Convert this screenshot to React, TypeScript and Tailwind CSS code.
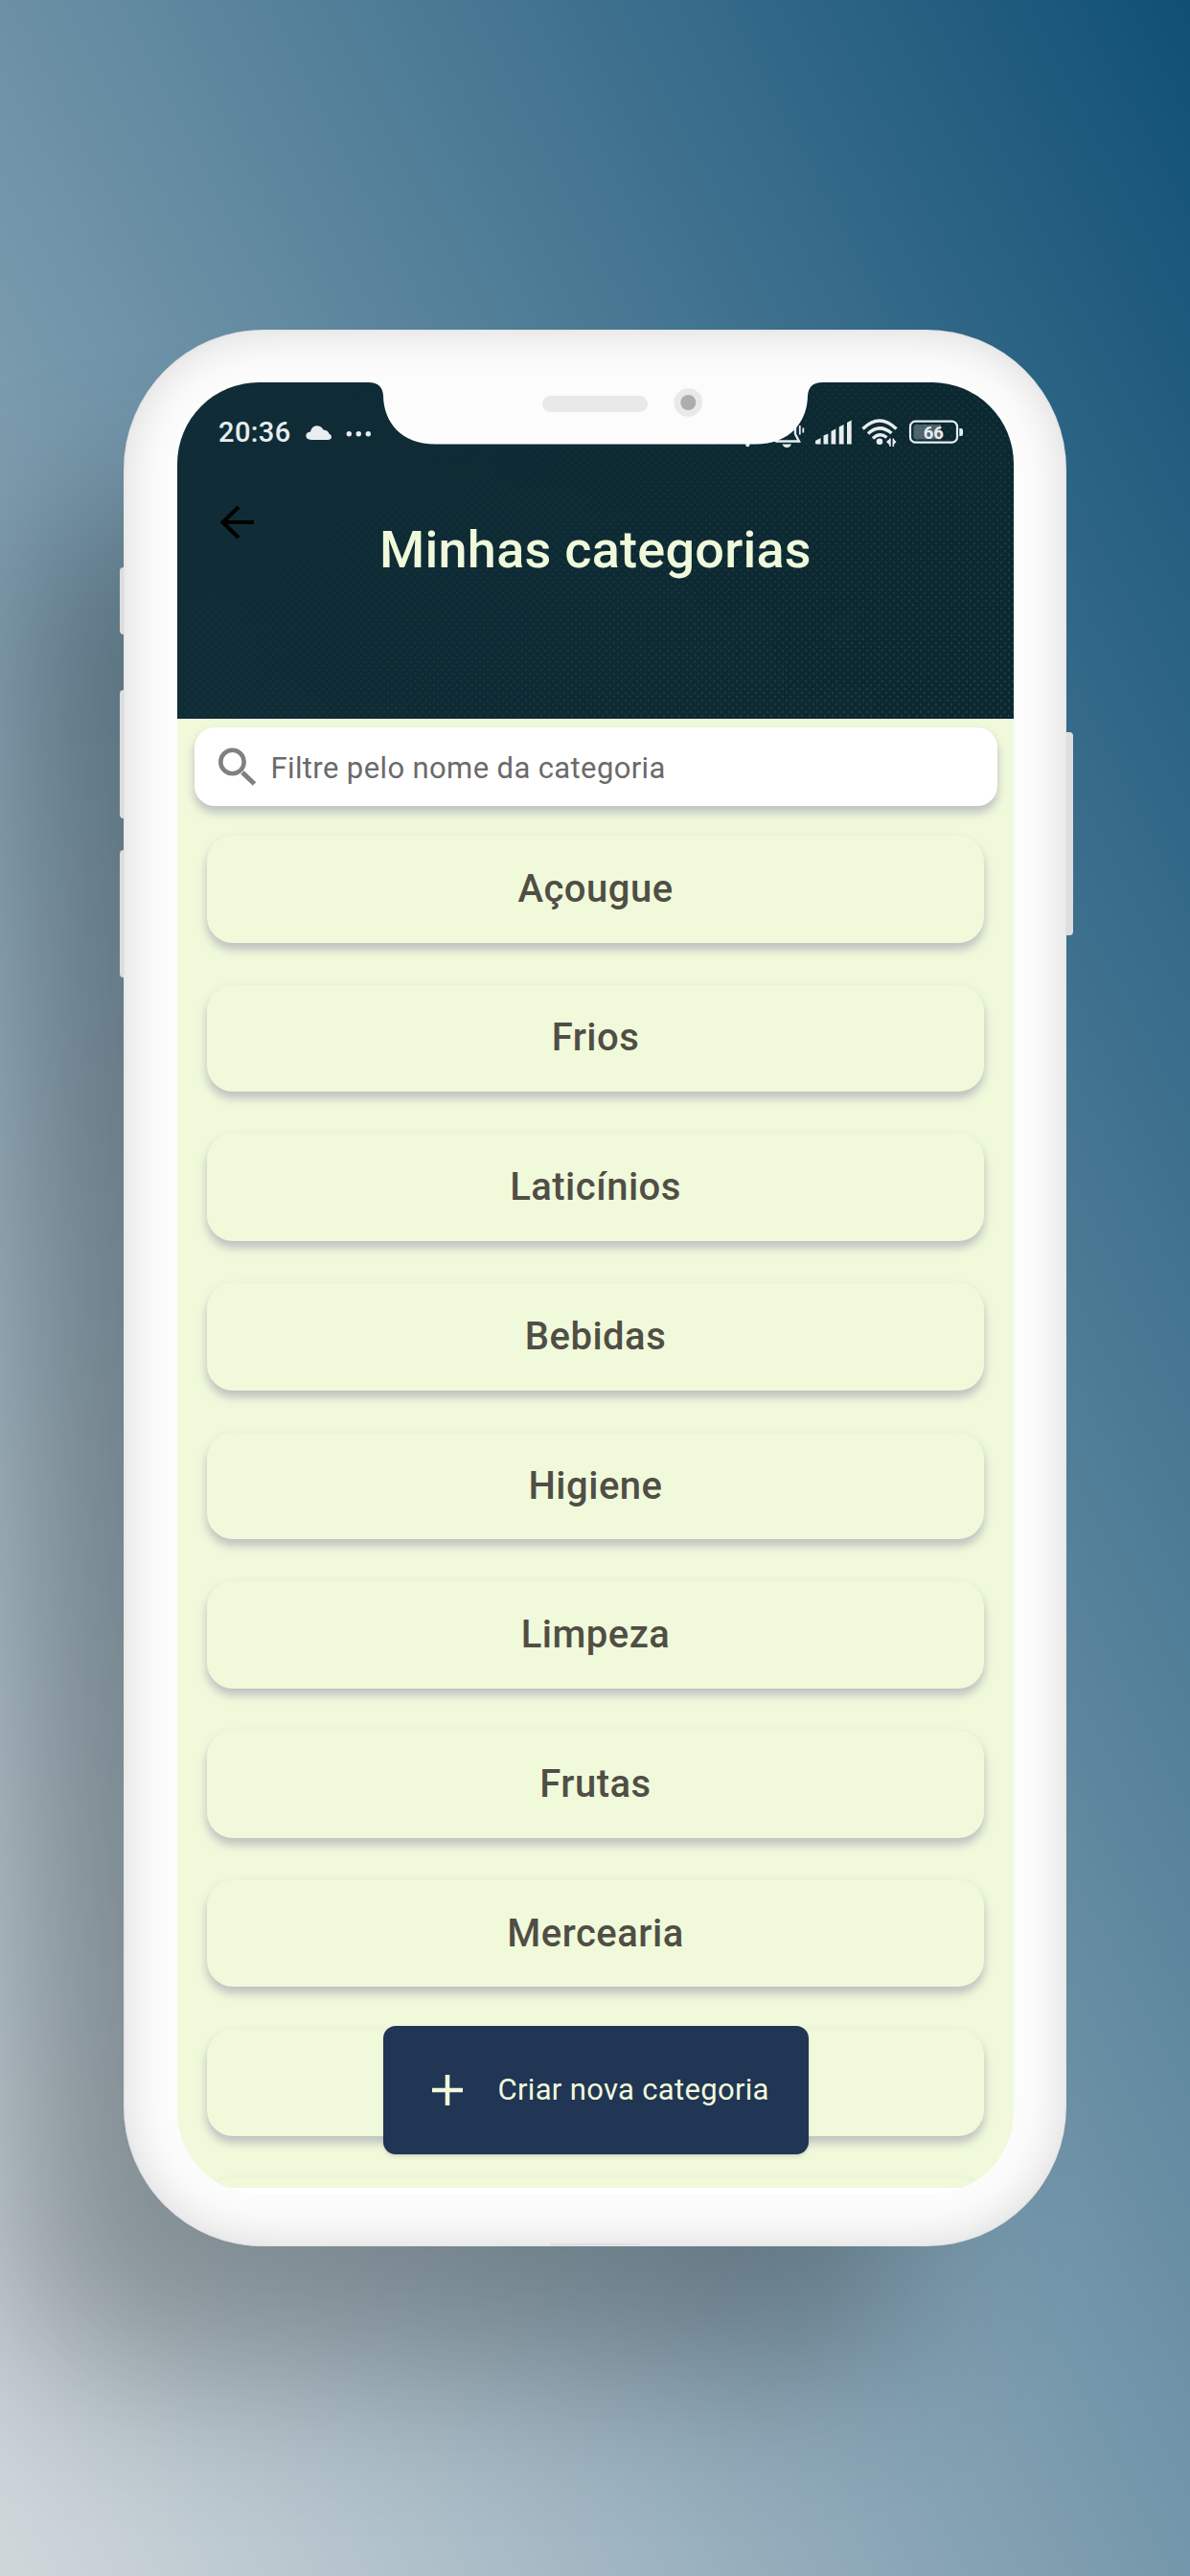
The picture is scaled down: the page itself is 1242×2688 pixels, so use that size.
const categories = [
  "Açougue",
  "Frios",
  "Laticínios",
  "Bebidas",
  "Higiene",
  "Limpeza",
  "Frutas",
  "Mercearia",
  "",
  "",
];

function Notch() {
  return (
    <svg className="absolute left-[200px] top-0 z-20" width="474" height="66" viewBox="385 399 474 66">
      <path
        d="M385 398 H858 V399 Q844 399 843 413 C842.5 440 825 463.5 788 463.5 H455 C418 463.5 400.5 440 400 413 Q399 399 385 399 Z"
        fill="#fcfcfc"
      />
      <rect x="566" y="413" width="110" height="17" rx="8.5" fill="#e9e9e9" />
      <circle cx="718.3" cy="420" r="14.8" fill="#e9e9e9" />
      <circle cx="718.3" cy="420" r="8" fill="#adadad" />
    </svg>
  );
}

function StatusIcons() {
  return (
    <svg width="240" height="40" viewBox="772 431 240 40" fill="#e8edf0">
      <circle cx="780.3" cy="464" r="2.2" />
      <path d="M809 461 L815 454 V446 Q815 438 821.5 438 Q829 438 830 446 V453 L834 460.5 H810" fill="none" stroke="#e8edf0" strokeWidth="2.4" />
      <path d="M816.5 463.5 H826 Q824.5 467 821.3 467 Q818 467 816.5 463.5 Z" />
      <path d="M834.8 444 V453.5 M838.3 446.5 V451.5" stroke="#e8edf0" strokeWidth="1.8" />
      <path d="M851 460 L856.5 457 V463.5 H852 Q851 463.5 851 462 Z" />
      <path d="M859.5 454.5 L864.3 452.5 V463.5 H859.5 Z" />
      <path d="M867.5 450 L872.3 447.5 V463.5 H867.5 Z" />
      <path d="M875.7 445.5 L880.6 443 V463.5 H875.7 Z" />
      <path d="M884 441 L888.7 438.5 V463.5 H884 Z" />
      <g fill="none" stroke="#e8edf0" strokeWidth="3.4">
        <path d="M900.5 447.5 Q918 430.500 935.5 447.5" />
        <path d="M906 452.5 Q918 441.5 930.5 452" />
        <path d="M911 457.5 Q918 450.5 925.5 456.5" />
      </g>
      <circle cx="918" cy="460.7" r="3.3" />
      <path d="M925 461 L929 457.5 V465 Z M935.5 461 L932 457.5 V465 Z" />
      <path d="M929 457.5 V466 M932.3 457.5 V466" stroke="#e8edf0" strokeWidth="1.5" />
      <rect x="950" y="439.7" width="49" height="22" rx="5.5" fill="none" stroke="#e8edf0" strokeWidth="2.2" />
      <path d="M953.5 446 Q953.5 443 956.5 443 H982 V458.5 H956.5 Q953.5 458.5 953.5 455.5 Z" opacity="0.3" />
      <path d="M1001.3 447 H1003 Q1005 447 1005 449 V453 Q1005 455 1003 455 H1001.3 Z" />
      <text x="974.3" y="458" textAnchor="middle" className="font-['Roboto',sans-serif] text-[18.5px] font-bold">66</text>
    </svg>
  );
}

export default function App() {
  return (
    <main className="flex h-[2688px] w-[1242px] items-start justify-center overflow-hidden bg-[linear-gradient(63deg,#d0d7db,#105075)] pt-[344px] font-['Roboto',sans-serif]">
      <div className="relative h-[2000px] w-[984px] rounded-[146px] shadow-[-140px_160px_165px_-30px_rgba(0,0,0,0.27)]">
        <i className="absolute -left-1 top-[248px] h-[70px] w-2 rounded-l-[4px] bg-[#dcdcdc]" />
        <i className="absolute -left-1 top-[376px] h-[134px] w-2 rounded-l-[4px] bg-[#dcdcdc]" />
        <i className="absolute -left-1 top-[543px] h-[133px] w-2 rounded-l-[4px] bg-[#dcdcdc]" />
        <i className="absolute -right-[7px] top-[420px] h-[212px] w-2 rounded-r-[4px] bg-[#dedede]" />
        <div className="relative h-full rounded-[146px] bg-[#fcfcfc] px-[56px] pt-[55px] shadow-[inset_0_0_48px_rgba(0,0,0,0.15),inset_0_0_2px_rgba(0,0,0,0.1)]">
          <div className="relative flex h-[1890px] w-[873px] flex-col overflow-hidden rounded-[85px] bg-white">
            <Notch />
            <header className="relative h-[351px] shrink-0 bg-[linear-gradient(100deg,#102d37,#0b2730)]">
              <div className="absolute inset-0 bg-[radial-gradient(circle,#2a4b54_0.8px,transparent_1.8px),radial-gradient(circle,#2a4b54_0.8px,transparent_1.8px)] bg-[size:8px_8px] bg-[position:0_0,4px_4px] opacity-60 [mask-image:linear-gradient(150deg,transparent_10%,black)]" />
              <div className="relative flex items-start justify-between pl-[43px] pr-[46px] pt-8">
                <div className="flex items-center pt-[6px]">
                  <span className="text-[29px] font-medium leading-none tracking-[0.4px] text-[#e8edf0]">20:36</span>
                  <svg className="ml-[14px]" width="70" height="20" viewBox="318 440 70 20" fill="#e8edf0">
                    <path d="M325 457 Q319.3 456.5 319.3 452.5 Q319.5 449 324 448.5 Q325.5 442.5 330.5 442.3 Q335 442.3 337.5 446.5 Q342.5 447 343.5 450.5 Q346.2 451.5 346 454 Q345.8 457 342 457 Z" />
                    <circle cx="364.3" cy="450.7" r="2.7" />
                    <circle cx="374.3" cy="450.7" r="2.7" />
                    <circle cx="384.3" cy="450.7" r="2.7" />
                  </svg>
                </div>
                <StatusIcons />
              </div>
              <svg className="absolute left-[43px] top-[126px]" width="40" height="40" viewBox="228 525 40 40" fill="none" stroke="#000" strokeWidth="4">
                <path d="M265 545 H233 M249 529 L232.5 545 L249 561" />
              </svg>
              <h1 className="relative mt-[76px] text-center text-[54px] font-medium leading-none tracking-[0.25px] text-[#f0fadb]">
                Minhas categorias
              </h1>
            </header>
            <section className="h-[1533px] shrink-0 overflow-hidden bg-[#f0fadb] px-[17.5px] pt-[9px]">
              <div className="flex h-[82px] items-center rounded-[21px] bg-white pl-6 shadow-[0_7px_10px_rgba(150,145,173,0.5),0_3px_14px_rgba(0,0,0,0.04)]">
                <svg width="42" height="42" viewBox="0 0 42 42" fill="none" stroke="#808080" strokeWidth="4.6">
                  <circle cx="15.5" cy="16" r="12.2" />
                  <path d="M26 27 L38.5 39" strokeWidth="5" />
                </svg>
                <span className="ml-[14px] mt-[2px] text-[31px] leading-none tracking-[0.38px] text-[#6a6a6a]">Filtre pelo nome da categoria</span>
              </div>
              <ul className="mt-[31px] flex flex-col gap-[44.2px] px-[13.5px]">
                {categories.map((name, i) => (
                  <li
                    key={i}
                    className="flex h-[111.5px] shrink-0 items-center justify-center rounded-[27px] bg-[#f0fadb] shadow-[0_7px_10px_rgba(150,145,173,0.5),0_3px_14px_rgba(0,0,0,0.04)]"
                  >
                    <span className="text-[40px] font-medium leading-none tracking-[0.5px] text-[#504e45]">{name}</span>
                  </li>
                ))}
              </ul>
            </section>
            <button className="absolute left-[215px] top-[1715px] flex h-[133.5px] w-[443.5px] items-center rounded-[13px] bg-[#213554] pl-[51px] shadow-[0_3px_4px_-1px_rgba(0,0,0,0.15)]">
              <svg width="32" height="32" viewBox="0 0 32 32" stroke="#f0fadb" strokeWidth="4.6">
                <path d="M0 16 H32 M16 0 V32" />
              </svg>
              <span className="ml-[36.5px] whitespace-nowrap text-[31px] leading-none tracking-[0.32px] text-[#f0fadb]">Criar nova categoria</span>
            </button>
          </div>
          <div className="absolute bottom-px left-[445px] h-[2px] w-[94px] bg-[#dfdfe0]" />
        </div>
      </div>
    </main>
  );
}
